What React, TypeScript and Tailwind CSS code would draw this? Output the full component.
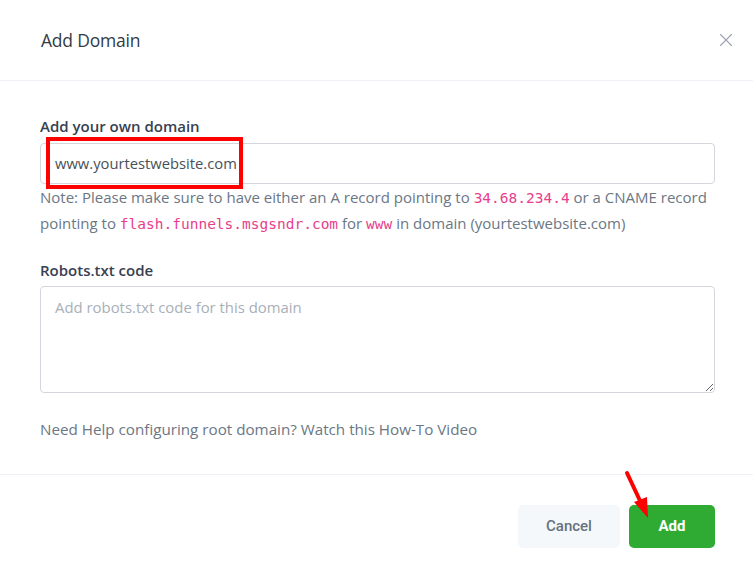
import { X } from "lucide-react";

const code = "font-['DejaVu_Sans_Mono',monospace] text-[14.5px] leading-none text-[#e83e8c]";

export default function App() {
  return (
    <div className="relative w-[753px] h-[571px] bg-white font-['Open_Sans',sans-serif] overflow-hidden">
      <div className="h-[81px] flex items-center justify-between pl-[41px] pr-[16px] border-b border-[#eef2f6]">
        <h1 className="text-[17.5px] text-[#333b45] tracking-[-0.2px]">Add Domain</h1>
        <X className="w-[22px] h-[22px] text-[#9aa5b1]" strokeWidth={1.2} />
      </div>

      <div className="pl-[40px] pr-[38px] pt-[35px] pb-[35px] border-b border-[#eef2f6]">
        <label className="block text-[15px] font-semibold leading-[20px] text-[#374151]">
          Add your own domain
        </label>
        <div className="relative mt-[7px]">
          <div className="h-[41px] rounded-[4px] border border-[#d3d6dc] flex items-center pl-[14px] text-[14.75px] text-[#495057]">
            www.yourtestwebsite.com
          </div>
          <div className="absolute left-[6px] top-[-6px] w-[197px] h-[52px] border-[4px] border-[#ff0000]" />
        </div>
        <p className="text-[15px] leading-[26px] text-[#6b7785]">
          Note: Please make sure to have either an A record pointing to{" "}
          <span className={code}>34.68.234.4</span> or a CNAME record pointing to{" "}
          <span className={code}>flash.funnels.msgsndr.com</span> for{" "}
          <span className={code}>www</span> in domain (yourtestwebsite.com)
        </p>

        <label className="block mt-[24px] text-[15px] font-semibold leading-[20px] text-[#374151]">
          Robots.txt code
        </label>
        <textarea
          className="mt-[6px] block w-full h-[107px] rounded-[4px] border border-[#d3d6dc] px-[14px] py-[9px] text-[14.9px] text-[#495057] placeholder:text-[#a8b0b9] outline-none"
          placeholder="Add robots.txt code for this domain"
        />

        <p className="mt-[26px] text-[15.2px] leading-[20px] text-[#6b7785]">
          Need Help configuring root domain? Watch this How-To Video
        </p>
      </div>

      <div className="flex justify-end gap-[9px] pt-[30px] pr-[38px]">
        <button className="w-[102px] h-[43px] rounded-[5px] bg-[#f5f8fb] text-[15px] font-medium text-[#66727d] font-['Roboto',sans-serif]">
          Cancel
        </button>
        <button className="w-[86px] h-[43px] rounded-[5px] bg-[#2fab33] text-[15px] font-bold text-white font-['Roboto',sans-serif]">
          Add
        </button>
      </div>

      <svg className="absolute left-[615px] top-[465px]" width="45" height="60" viewBox="0 0 45 60">
        <line x1="12" y1="8" x2="27" y2="40" stroke="#ff0000" strokeWidth="4" strokeLinecap="round" />
        <polygon points="33,53 19,37 32,32" fill="#ff0000" />
      </svg>
    </div>
  );
}
